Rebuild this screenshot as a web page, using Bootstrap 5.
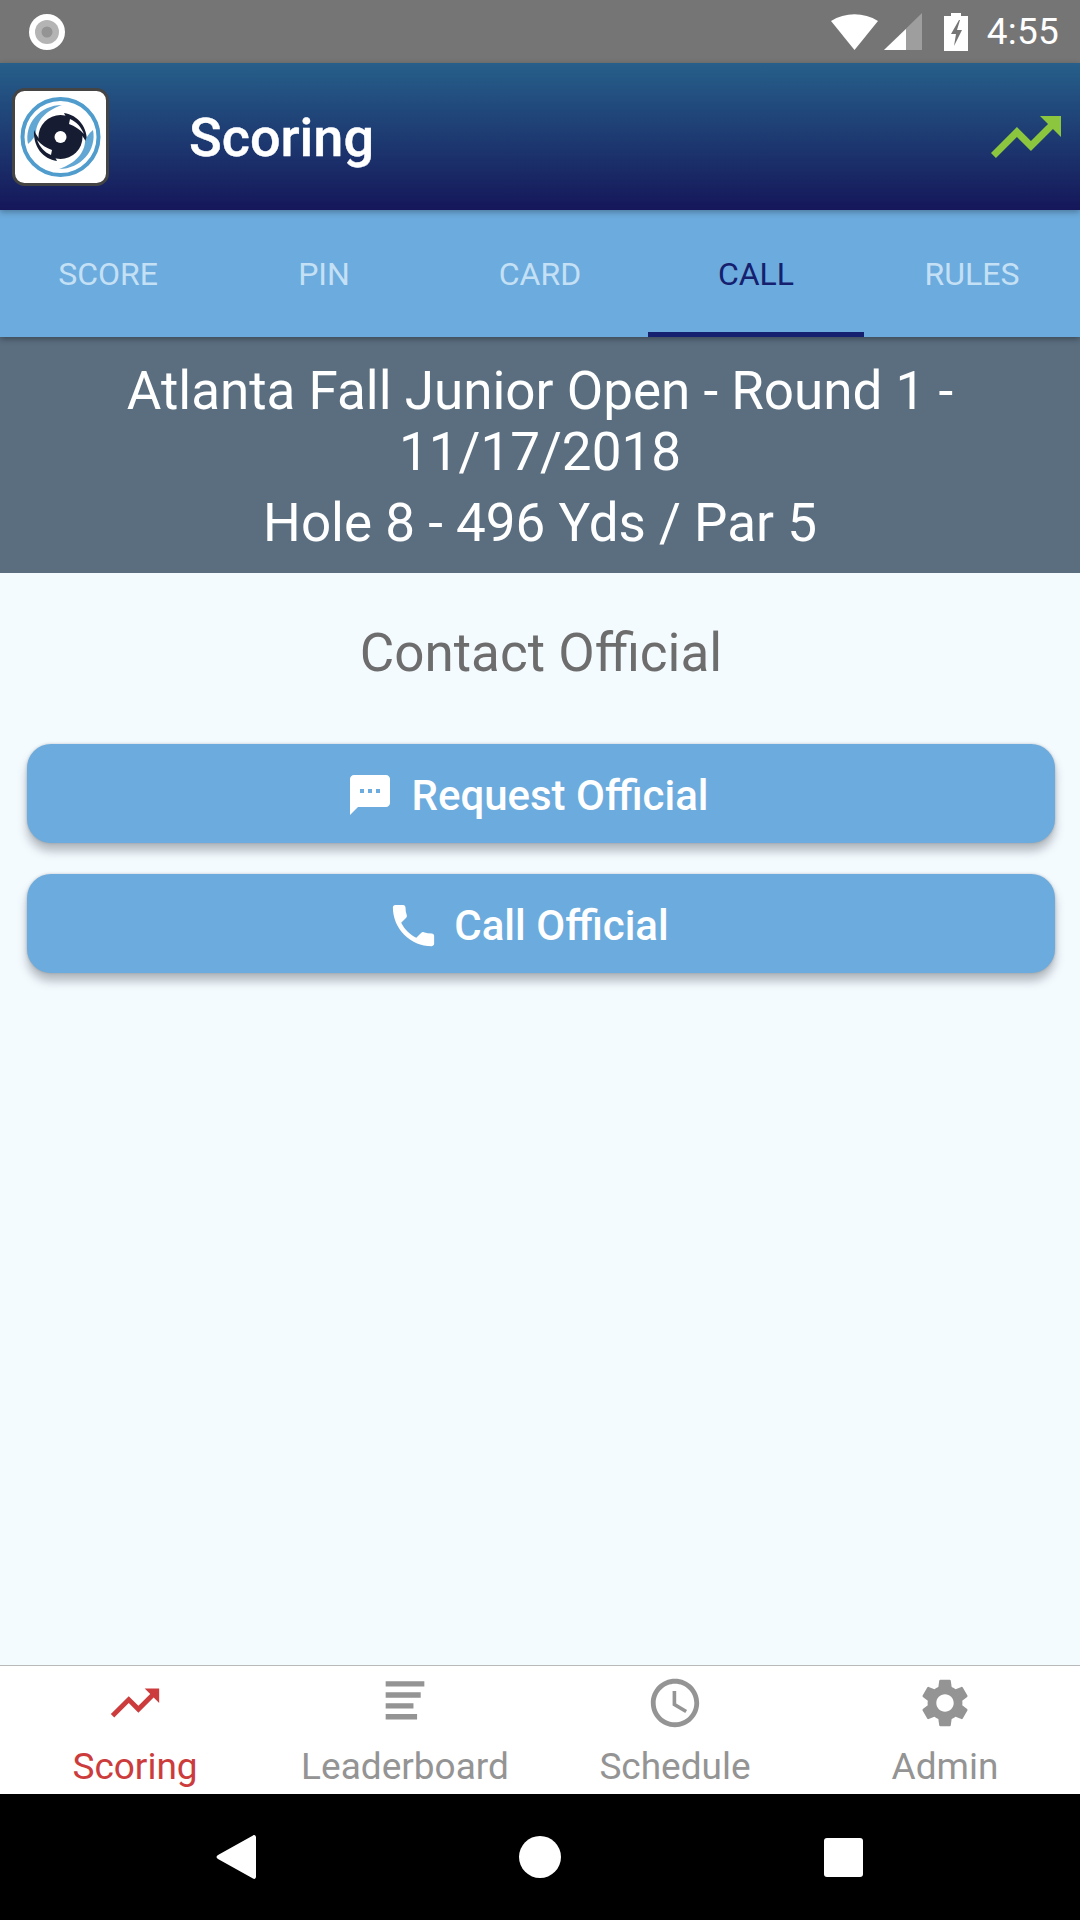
<!DOCTYPE html>
<html lang="en">
<head>
  <meta charset="UTF-8">
  <title>Scoring</title>
  <link href="https://cdn.jsdelivr.net/npm/bootstrap@5.3.0/dist/css/bootstrap.min.css" rel="stylesheet">
  <style>
    body { font-family: Roboto, "Liberation Sans", sans-serif; background: #f4fbff; }
    .app-screen { width: 1080px; height: 1920px; overflow: hidden; }

    /* Android status bar */
    .status-strip { height: 63px; background: #757575; color: #fff; padding: 0 21px 0 28px; }
    .status-time { font-size: 37px; line-height: 1; letter-spacing: .2px; margin-left: 19px; }
    .signal-icon { margin-left: 6px; }
    .battery-icon { margin-left: 22px; }

    /* Header */
    .app-header { height: 147px; background: linear-gradient(#265f8a, #15175a); padding: 0 19px 0 12px; position: relative; z-index: 2; box-shadow: 0 2px 6px rgba(0,0,0,.3); }
    .app-logo { width: 97px; height: 98px; }
    .app-title { font-size: 54px; font-weight: 500; color: #fff; margin: 3px 0 0 80px; line-height: 1; -webkit-text-stroke: .4px #fff; }

    /* Tabs */
    .tab-strip { height: 127px; background: #6cabdd; box-shadow: 0 2px 6px rgba(0,0,0,.35); position: relative; z-index: 1; }
    .tab-item { flex: 1 1 0; display: flex; align-items: center; justify-content: center; font-size: 32px; color: #c4e0f5; text-transform: uppercase; border-bottom: 5px solid transparent; padding-top: 6px; }
    .tab-item.is-on { color: #15206e; border-bottom-color: #15206e; }

    /* Event header */
    .event-band { height: 236px; background: #5a6e80; color: #fff; text-align: center; padding-top: 24px; font-size: 53px; }
    .event-name { line-height: 61px; }
    .event-hole { line-height: 61px; margin-top: 10px; }

    /* Main */
    .main-area { flex: 1 1 0; background: #f4fbff; padding: 0 25px 0 27px; }
    .section-title { font-size: 53px; color: #6d6d6d; text-align: center; line-height: 60px; margin: 50px 0 61px; }
    .action-btn { height: 99px; width: 100%; background: #6cabdd; border: 0; border-radius: 24px; color: #fff; font-size: 42px; font-weight: 500; box-shadow: 0 8px 10px rgba(60,70,80,.36), 0 0 3px rgba(60,70,80,.28); gap: 17px; padding: 3px 27px 0 0; }
    .action-btn:hover, .action-btn:active { background: #6cabdd !important; color: #fff !important; }
    .action-btn + .action-btn { margin-top: 31px; }
    .action-btn svg { width: 48px; height: 48px; fill: #fff; }
    .action-btn svg.phone-glyph { width: 55px; height: 55px; margin-right: -4px; }

    /* Bottom nav */
    .bottom-tabs { height: 129px; background: #fff; border-top: 1px solid #b9b9b9; }
    .bottom-item { flex: 1 1 0; color: #949494; font-size: 37px; line-height: 1; text-align: center; padding-top: 8px; }
    .bottom-item svg { width: 58px; height: 58px; fill: #949494; display: block; margin: 0 auto 16px; }
    .bottom-item.is-on { color: #cc3c3c; }
    .bottom-item.is-on svg { fill: #cc3c3c; }

    /* Android nav */
    .system-bar { height: 126px; background: #000; }
    .sys-back { margin-left: 216px; }
    .sys-home, .sys-recent { margin-left: 263px; }
  </style>
</head>
<body>
  <div class="app-screen d-flex flex-column">

    <div class="status-strip d-flex align-items-center justify-content-between">
      <svg width="38" height="38" viewBox="0 0 38 38"><circle cx="19" cy="19" r="18" fill="#fff"/><circle cx="19" cy="19" r="12" fill="#b4b4b4"/><circle cx="19" cy="19" r="5.5" fill="#949494"/></svg>
      <div class="d-flex align-items-center">
        <svg width="47" height="38" viewBox="0 0 47 38"><path d="M0 8C14-1 33-1 47 8L23.500 37z" fill="#fff"/></svg>
        <svg class="signal-icon" width="38" height="38" viewBox="0 0 38 38"><path d="M0 37L38 0V37z" fill="#9e9e9e"/><path d="M0 37L22 16V37z" fill="#fff"/></svg>
        <svg class="battery-icon" width="24" height="38" viewBox="0 0 24 38"><path d="M7 0h10v3h7v35H0V3h7z" fill="#fff"/><path d="M15 7L7 21h5l-2 12 8-16h-5l3-10z" fill="#757575"/></svg>
        <span class="status-time">4:55</span>
      </div>
    </div>

    <header class="app-header d-flex align-items-center">
      <svg class="app-logo flex-shrink-0" viewBox="0 0 97 98">
        <defs>
          <filter id="soft"><feGaussianBlur stdDeviation=".5"/></filter>
          <g id="swirl">
            <!-- blue arm -->
            <path d="M16 56C12 36 28 17 50 17 38 21 25 30 24 44c-1 4-3 8-8 12z" fill="#62a7d3"/>
            <!-- dark tail and white slash -->
            <path d="M52 25c14 2 24 14 23 31-4-9-9-14-16-17z" fill="#161d33"/>
            <path d="M58 31c7 3 11 8 14 15-5-5-9-8-15-10z" fill="#fff"/>
          </g>
        </defs>
        <rect x="1.500" y="1.500" width="94" height="95" rx="11" fill="#fff" stroke="#444" stroke-width="3"/>
        <g filter="url(#soft)">
          <circle cx="48.500" cy="49" r="38" fill="none" stroke="#4f9ccd" stroke-width="4"/>
          <circle cx="48.500" cy="49" r="22" fill="#161d33"/>
          <use href="#swirl"/>
          <use href="#swirl" transform="rotate(180 48.500 49)"/>
          <circle cx="48.500" cy="49" r="6" fill="#fff"/>
        </g>
      </svg>
      <div class="app-title flex-grow-1">Scoring</div>
      <svg width="70" height="70" viewBox="2 2 20 20" fill="#8cc63f"><path d="M16 6l2.290 2.290-4.880 4.880-4-4L2 16.590 3.410 18l6-6 4 4 6.300-6.290L22 12V6z"/></svg>
    </header>

    <nav class="tab-strip d-flex">
      <div class="tab-item">Score</div>
      <div class="tab-item">Pin</div>
      <div class="tab-item">Card</div>
      <div class="tab-item is-on">Call</div>
      <div class="tab-item">Rules</div>
    </nav>

    <section class="event-band">
      <div class="event-name">Atlanta Fall Junior Open - Round 1 -<br>11/17/2018</div>
      <div class="event-hole">Hole 8 - 496 Yds / Par 5</div>
    </section>

    <main class="main-area">
      <div class="section-title">Contact Official</div>
      <button class="btn action-btn d-flex align-items-center justify-content-center" type="button">
        <svg viewBox="0 0 24 24"><path d="M20 2H4c-1.100 0-2 .9-2 2v18l4-4h14c1.100 0 2-.9 2-2V4c0-1.100-.9-2-2-2zM9 11H7V9h2v2zm4 0h-2V9h2v2zm4 0h-2V9h2v2z"/></svg>
        Request Official
      </button>
      <button class="btn action-btn d-flex align-items-center justify-content-center" type="button">
        <svg class="phone-glyph" viewBox="0 0 24 24"><path d="M6.620 10.790c1.440 2.830 3.760 5.140 6.590 6.590l2.200-2.200c.27-.27.67-.36 1.020-.24 1.120.37 2.330.57 3.570.57.55 0 1 .45 1 1V20c0 .55-.45 1-1 1-9.390 0-17-7.610-17-17 0-.55.45-1 1-1h3.500c.55 0 1 .45 1 1 0 1.250.2 2.450.57 3.570.11.35.03.74-.25 1.020l-2.200 2.200z"/></svg>
        Call Official
      </button>
    </main>

    <nav class="bottom-tabs d-flex">
      <div class="bottom-item is-on">
        <svg viewBox="0 0 24 24"><path d="M16 6l2.290 2.290-4.880 4.880-4-4L2 16.590 3.410 18l6-6 4 4 6.300-6.290L22 12V6z"/></svg>
        Scoring
      </div>
      <div class="bottom-item">
        <svg viewBox="0 0 24 24"><path d="M4 3h16v2.200H4zM4 7.600h14.500v2.200H4zM4 12.100h11.500v2.200H4zM4 16.600h13v2.200H4z"/></svg>
        Leaderboard
      </div>
      <div class="bottom-item">
        <svg viewBox="0 0 24 24"><path d="M11.990 2C6.470 2 2 6.480 2 12s4.470 10 9.990 10C17.520 22 22 17.520 22 12S17.520 2 11.990 2zM12 20c-4.420 0-8-3.580-8-8s3.580-8 8-8 8 3.580 8 8-3.580 8-8 8zm.5-13H11v6l5.250 3.150.75-1.230-4.500-2.670z"/></svg>
        Schedule
      </div>
      <div class="bottom-item">
        <svg viewBox="0 0 24 24"><path d="M19.140 12.940c.04-.3.060-.61.060-.94 0-.32-.02-.64-.07-.94l2.030-1.580c.18-.14.230-.41.120-.61l-1.920-3.320c-.12-.22-.37-.29-.59-.22l-2.390.96c-.5-.38-1.030-.7-1.620-.94l-.36-2.540c-.04-.24-.24-.41-.48-.41h-3.840c-.24 0-.43.170-.47.41l-.36 2.540c-.59.240-1.130.570-1.620.94l-2.390-.96c-.22-.08-.47 0-.59.220L2.740 8.870c-.12.210-.08.470.12.610l2.030 1.580c-.05.3-.09.630-.09.940s.02.640.07.940l-2.030 1.580c-.18.140-.23.410-.12.610l1.920 3.320c.12.220.37.290.59.220l2.390-.96c.5.380 1.030.7 1.620.94l.36 2.540c.05.240.24.410.48.410h3.840c.24 0 .44-.17.47-.41l.36-2.540c.59-.24 1.130-.56 1.620-.94l2.390.96c.22.080.47 0 .59-.22l1.920-3.320c.12-.22.070-.47-.12-.61l-2.010-1.580zM12 15.600c-1.980 0-3.600-1.620-3.600-3.600s1.620-3.600 3.600-3.600 3.600 1.620 3.600 3.600-1.620 3.600-3.600 3.600z"/></svg>
        Admin
      </div>
    </nav>

    <div class="system-bar d-flex align-items-center">
      <svg class="sys-back flex-shrink-0" width="40" height="46" viewBox="0 0 40 46"><path d="M37 1.500c1.500-1 3 0 3 2v39c0 2-1.500 3-3 2L2 25c-2-1-2-3 0-4z" fill="#fff"/></svg>
      <svg class="sys-home flex-shrink-0" width="42" height="42" viewBox="0 0 42 42"><circle cx="21" cy="21" r="21" fill="#fff"/></svg>
      <svg class="sys-recent flex-shrink-0" width="39" height="39" viewBox="0 0 39 39"><rect width="39" height="39" rx="3" fill="#fff"/></svg>
    </div>
  </div>

  <script src="https://cdn.jsdelivr.net/npm/bootstrap@5.3.0/dist/js/bootstrap.bundle.min.js"></script>
</body>
</html>
